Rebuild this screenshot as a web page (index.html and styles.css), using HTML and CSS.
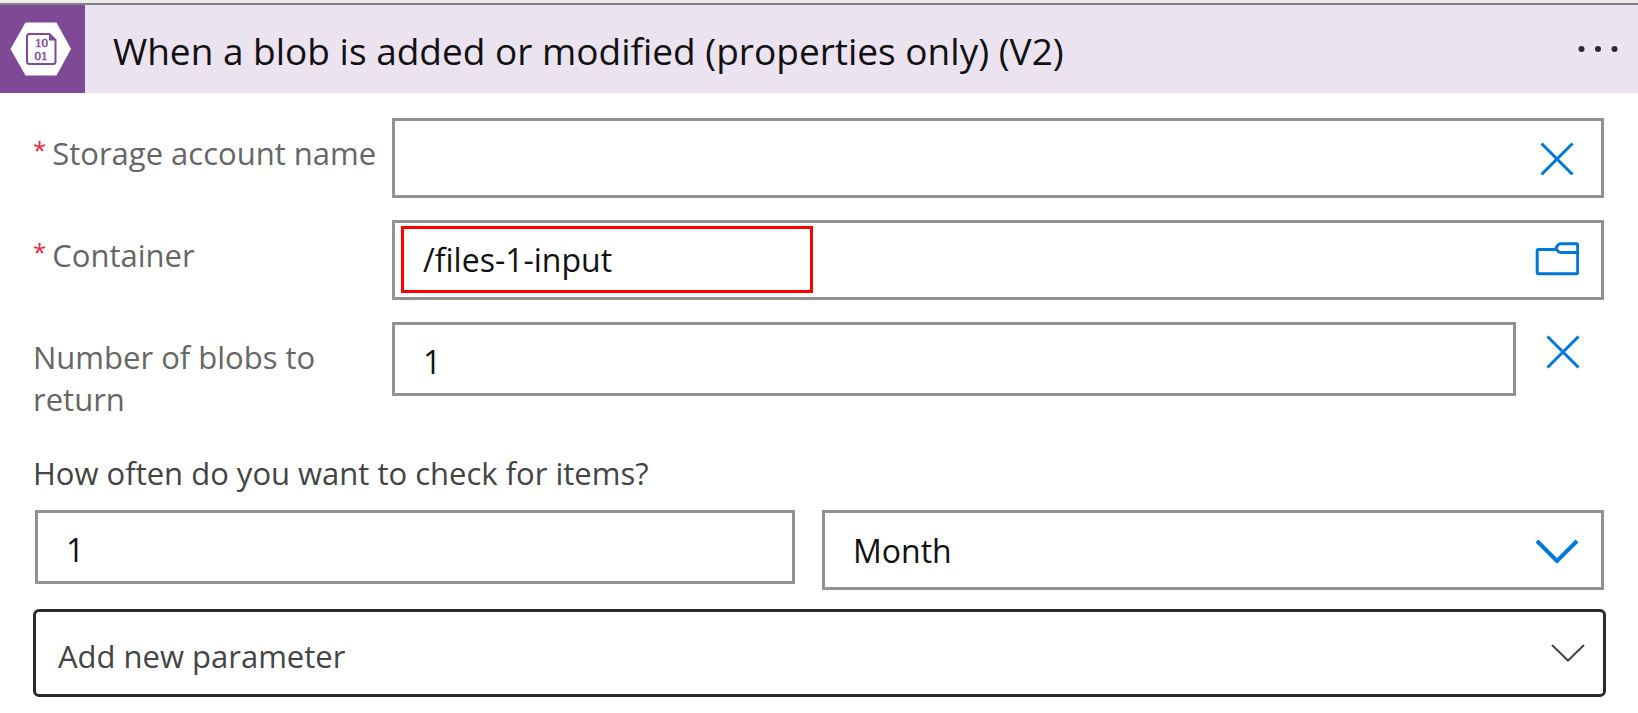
FILE: index.html
```html
<!DOCTYPE html>
<html lang="en">
<head>
<meta charset="utf-8">
<title>When a blob is added or modified</title>
<link rel="stylesheet" href="styles.css">
</head>
<body>
<main class="card">
  <header class="card-header">
    <div class="tile">
      <svg class="tile-icon" viewBox="0 0 62 54" width="62" height="54" aria-hidden="true">
        <path d="M15.500 0.500H46.500L61 27L46.500 53.500H15.500L0.500 27Z" fill="#fff"/>
        <path d="M39.500 12H19.500Q17 12 17 14.500V39.500Q17 42 19.500 42H43Q45.500 42 45.500 39.500V18Z" fill="#fff" stroke="#804998" stroke-width="2"/>
        <path d="M39 11.500V18.500H46Z" fill="#804998"/>
        <text class="tile-digits" x="31.500" y="25" text-anchor="middle">10</text>
        <text class="tile-digits" x="31" y="38" text-anchor="middle">01</text>
      </svg>
    </div>
    <h1 class="title">When a blob is added or modified (properties only) (V2)</h1>
    <button class="icon-button menu" type="button" aria-label="More commands">
      <svg viewBox="0 0 40 8" width="40" height="8" fill="#2b2b2b"><circle cx="3.500" cy="4" r="3"/><circle cx="20" cy="4" r="3"/><circle cx="36.500" cy="4" r="3"/></svg>
    </button>
  </header>

  <form class="form">
    <div class="row">
      <label class="label label-single" for="account"><span class="required">*</span>Storage account name</label>
      <div class="field tall">
        <input class="input" id="account" type="text">
        <button class="icon-button field-button" type="button" aria-label="Clear storage account">
          <svg viewBox="0 0 34 34" width="34" height="34"><path class="cross" d="M1.500 2.500L32.500 33.500M32.500 2.500L1.500 33.500"/></svg>
        </button>
      </div>
    </div>

    <div class="row">
      <label class="label label-single" for="container"><span class="required">*</span>Container</label>
      <div class="field tall">
        <input class="input" id="container" type="text" value="/files-1-input">
        <button class="icon-button field-button" type="button" aria-label="Browse folders">
          <svg viewBox="0 1 44 36" width="44" height="36"><path class="folder" d="M20.500 8.500H3.500Q2.200 8.500 2.200 10V31.500Q2.200 32.700 3.500 32.700H41.500Q42.700 32.700 42.700 31.500V4Q42.700 2.700 41.500 2.700H25.500Q23.500 2.700 22.300 5Q20.300 7.500 22 9Q23.500 11.500 25.500 11.500H42.500"/></svg>
        </button>
        <span class="highlight"></span>
      </div>
    </div>

    <div class="row">
      <label class="label" for="count">Number of blobs to return</label>
      <div class="removable">
        <div class="field">
          <input class="input input-low" id="count" type="text" value="1">
        </div>
        <button class="icon-button remove" type="button" aria-label="Remove parameter">
          <svg viewBox="0 0 34 34" width="34" height="34"><path class="cross" d="M1.500 1.500L32.500 32.500M32.500 1.500L1.500 32.500"/></svg>
        </button>
      </div>
    </div>

    <fieldset class="recurrence">
      <legend class="question">How often do you want to check for items?</legend>
      <div class="recurrence-fields">
        <div class="field">
          <input class="input input-low" type="text" value="1" aria-label="Interval">
        </div>
        <div class="field tall">
          <select class="input select" aria-label="Frequency"><option>Month</option></select>
          <svg class="arrow" viewBox="0 0 44 26" width="44" height="26"><path class="chevron" d="M2 4L22 24L42 4"/></svg>
        </div>
      </div>
    </fieldset>

    <div class="field add">
      <select class="input" aria-label="Add new parameter"><option>Add new parameter</option></select>
      <svg class="arrow" viewBox="0 0 34 18" width="34" height="18"><path class="chevron-thin" d="M1 1L17 16.500L33 1"/></svg>
    </div>
  </form>
</main>
</body>
</html>
```
FILE: styles.css
```css
* {
  box-sizing: border-box;
}

body {
  margin: 0;
  background: #fff;
  color: #111;
  font: 32px/42px "Open Sans", "Noto Sans", sans-serif;
}

.card {
  border-top: 3px solid #ececec;
}

.card-header {
  display: flex;
  align-items: center;
  height: 90px;
  border-top: 2px solid #857f80;
  background: #ebe3f0;
}

.tile {
  display: flex;
  align-items: center;
  justify-content: center;
  flex: none;
  width: 85px;
  height: 88px;
  padding-right: 4px;
  background: #804998;
}

.tile-digits {
  fill: #804998;
  font: 500 13px/13px "Liberation Serif", serif;
  stroke: #804998;
  stroke-width: 0.5px;
}

.title {
  flex: 1;
  margin: 0;
  padding: 3px 0 0 28px;
  font-size: 37px;
  font-weight: 400;
  line-height: 48px;
}

.icon-button {
  display: flex;
  align-items: center;
  justify-content: center;
  flex: none;
  padding: 0;
  border: 0;
  background: none;
}

.menu {
  width: 80px;
  height: 88px;
}

.form {
  padding: 25px 34px 17px 33px;
}

.row {
  display: grid;
  grid-template-columns: 359px 1fr;
  align-items: start;
  margin-bottom: 22px;
}

.label {
  padding-top: 14px;
  color: #666;
  font-size: 31px;
}

.label-single {
  display: flex;
  gap: 6px;
  height: 54px;
  overflow: hidden;
  white-space: nowrap;
}

.required {
  color: #f0203a;
  font-size: 24px;
  line-height: 36px;
}

.field {
  position: relative;
  display: flex;
  flex: 1;
  height: 74px;
  border: 3px solid #929292;
}

.tall {
  height: 80px;
}

.input {
  flex: 1;
  min-width: 0;
  padding: 0 28px;
  border: 0;
  outline: 0;
  background: transparent;
  color: #111;
  font: inherit;
  appearance: none;
}

.input-low {
  padding-top: 6px;
}

.select {
  padding-top: 2px;
}

.field-button {
  width: 88px;
}

.highlight {
  position: absolute;
  top: 3px;
  left: 6px;
  width: 412px;
  height: 67px;
  border: 3px solid #f00;
  pointer-events: none;
}

.removable {
  display: flex;
}

.remove {
  width: 88px;
  height: 60px;
  padding-left: 6px;
}

.cross {
  fill: none;
  stroke: #0078d7;
  stroke-width: 3;
}

.folder {
  fill: none;
  stroke: #0078d7;
  stroke-width: 3;
}

.recurrence {
  margin: 32px 0 19px;
  padding: 0;
  border: 0;
}

.question {
  margin-bottom: 16px;
  padding: 0;
  color: #444;
  font-size: 31px;
}

.recurrence-fields {
  display: grid;
  grid-template-columns: 760fr 782fr;
  gap: 27px;
  align-items: start;
  margin-left: 2px;
}

.arrow {
  position: absolute;
  top: 0;
  right: 22px;
  bottom: 0;
  margin: auto 0;
  pointer-events: none;
}

.chevron {
  fill: none;
  stroke: #0078d7;
  stroke-width: 4;
}

.add {
  height: 88px;
  margin-right: -2px;
  border-color: #2b2b2b;
  border-radius: 6px;
  font-size: 31px;
}

.add .input {
  padding: 6px 22px 0;
  color: #444;
}

.add .arrow {
  right: 18px;
}

.chevron-thin {
  fill: none;
  stroke: #444;
  stroke-width: 2;
}
```
